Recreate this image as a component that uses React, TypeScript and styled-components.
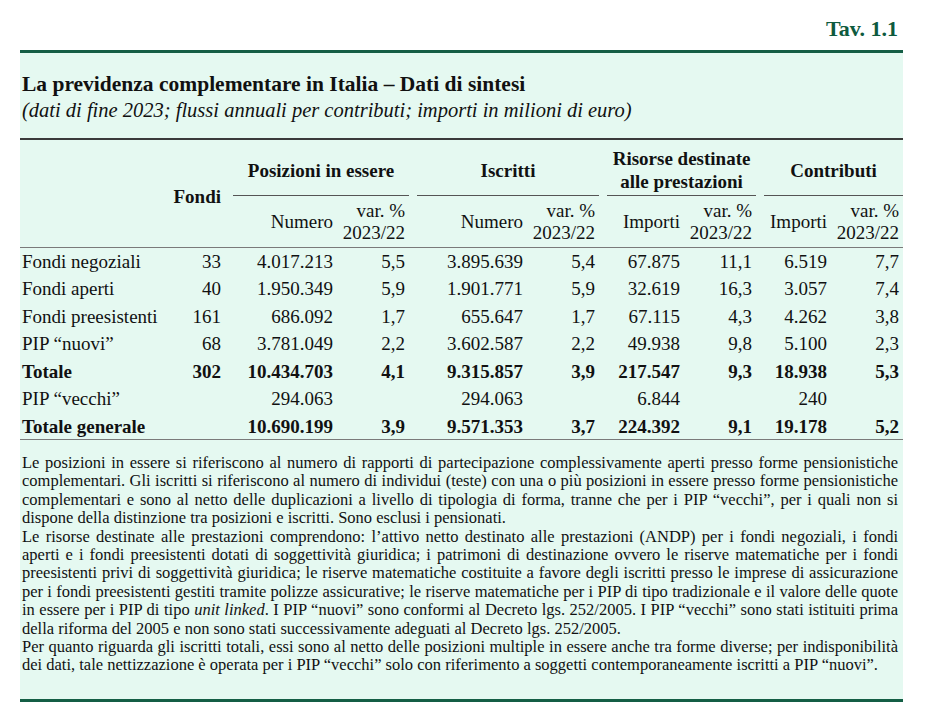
import React from "react";
import styled, { createGlobalStyle } from "styled-components";

const GlobalStyle = createGlobalStyle`
  html, body { margin: 0; padding: 0; background: #ffffff; }
  body { font-family: "Liberation Serif", "Times New Roman", serif; color: #111; }
`;

type Row = {
  label: string;
  fondi?: string;
  values: string[];
  bold?: boolean;
};

const rows: Row[] = [
  { label: "Fondi negoziali", fondi: "33", values: ["4.017.213", "5,5", "3.895.639", "5,4", "67.875", "11,1", "6.519", "7,7"] },
  { label: "Fondi aperti", fondi: "40", values: ["1.950.349", "5,9", "1.901.771", "5,9", "32.619", "16,3", "3.057", "7,4"] },
  { label: "Fondi preesistenti", fondi: "161", values: ["686.092", "1,7", "655.647", "1,7", "67.115", "4,3", "4.262", "3,8"] },
  { label: "PIP \u201cnuovi\u201d", fondi: "68", values: ["3.781.049", "2,2", "3.602.587", "2,2", "49.938", "9,8", "5.100", "2,3"] },
  { label: "Totale", fondi: "302", values: ["10.434.703", "4,1", "9.315.857", "3,9", "217.547", "9,3", "18.938", "5,3"], bold: true },
  { label: "PIP \u201cvecchi\u201d", values: ["294.063", "", "294.063", "", "6.844", "", "240", ""] },
  { label: "Totale generale", values: ["10.690.199", "3,9", "9.571.353", "3,7", "224.392", "9,1", "19.178", "5,2"], bold: true },
];

const groups = [
  { title: ["Posizioni in essere"], first: "Numero" },
  { title: ["Iscritti"], first: "Numero" },
  { title: ["Risorse destinate", "alle prestazioni"], first: "Importi" },
  { title: ["Contributi"], first: "Importi" },
];

const colWidths = [145, 60, 112, 72, 118, 72, 85, 72, 75, 72];

// note paragraphs, one entry per printed line
const notes: React.ReactNode[][] = [
  [
    "Le posizioni in essere si riferiscono al numero di rapporti di partecipazione complessivamente aperti presso forme pensionistiche",
    "complementari. Gli iscritti si riferiscono al numero di individui (teste) con una o più posizioni in essere presso forme pensionistiche",
    "complementari e sono al netto delle duplicazioni a livello di tipologia di forma, tranne che per i PIP “vecchi”, per i quali non si",
    "dispone della distinzione tra posizioni e iscritti. Sono esclusi i pensionati.",
  ],
  [
    "Le risorse destinate alle prestazioni comprendono: l’attivo netto destinato alle prestazioni (ANDP) per i fondi negoziali, i fondi",
    "aperti e i fondi preesistenti dotati di soggettività giuridica; i patrimoni di destinazione ovvero le riserve matematiche per i fondi",
    "preesistenti privi di soggettività giuridica; le riserve matematiche costituite a favore degli iscritti presso le imprese di assicurazione",
    "per i fondi preesistenti gestiti tramite polizze assicurative; le riserve matematiche per i PIP di tipo tradizionale e il valore delle quote",
    <>
      in essere per i PIP di tipo <i>unit linked</i>. I PIP “nuovi” sono conformi al Decreto lgs. 252/2005. I PIP “vecchi” sono stati istituiti prima
    </>,
    "della riforma del 2005 e non sono stati successivamente adeguati al Decreto lgs. 252/2005.",
  ],
  [
    "Per quanto riguarda gli iscritti totali, essi sono al netto delle posizioni multiple in essere anche tra forme diverse; per indisponibilità",
    "dei dati, tale nettizzazione è operata per i PIP “vecchi” solo con riferimento a soggetti contemporaneamente iscritti a PIP “nuovi”.",
  ],
];

const Page = styled.div`
  padding: 0 25px 0 20px;
`;

const TavBar = styled.div`
  height: 50px;
  display: flex;
  align-items: flex-end;
  justify-content: flex-end;
  padding-right: 5px;
  box-sizing: border-box;
`;

const Tav = styled.div`
  color: #0e5a3e;
  font-weight: bold;
  font-size: 22px;
  line-height: 22px;
  padding-bottom: 10px;
`;

const Panel = styled.div`
  background: #e5f9f1;
  border-top: 3px solid #145e45;
  border-bottom: 3px solid #145e45;
  padding-bottom: 24px;
`;

const TitleBlock = styled.div`
  padding: 19px 5px 15px 2px;
  border-bottom: 2px solid #3b3b3b;
`;

const Title = styled.div`
  font-weight: bold;
  font-size: 21.5px;
  line-height: 25px;
`;

const Subtitle = styled.div`
  font-style: italic;
  font-size: 20.5px;
  line-height: 26px;
`;

const Table = styled.table`
  width: 100%;
  table-layout: fixed;
  border-collapse: collapse;
  font-size: 19px;
  border-bottom: 1px solid #7a7a7a;
`;

const HeadCell = styled.th<{ $align?: string }>`
  font-weight: bold;
  text-align: ${(p) => p.$align || "right"};
  vertical-align: middle;
  padding: 6px 4px 0 0;
  line-height: 23px;
`;

const GroupRule = styled.div`
  margin-left: 8px;
  border-bottom: 1px solid #555;
  text-align: center;
  height: 56px;
  padding-top: 5px;
  display: flex;
  flex-direction: column;
  justify-content: center;
  font-weight: bold;
  line-height: 23px;
  box-sizing: border-box;
`;

const SubRow = styled.tr`
  height: 51px;
  border-bottom: 1px solid #7a7a7a;
`;

const SubCell = styled.th`
  font-weight: normal;
  text-align: right;
  vertical-align: middle;
  padding: 1px 4px 0 0;
  line-height: 22px;
  white-space: nowrap;
`;

const BodyRow = styled.tr<{ $bold?: boolean }>`
  height: 27.5px;
  font-weight: ${(p) => (p.$bold ? "bold" : "normal")};
`;

const LabelCell = styled.td`
  text-align: left;
  padding: 2px 0 0 2px;
  white-space: nowrap;
`;

const NumCell = styled.td`
  text-align: right;
  padding: 2px 4px 0 0;
  white-space: nowrap;
`;

const Notes = styled.div`
  padding: 14px 5px 0 2px;
  font-size: 16.5px;
  line-height: 18.4px;
`;

const NoteLine = styled.div<{ $last?: boolean }>`
  white-space: nowrap;
  text-align: ${(p) => (p.$last ? "left" : "justify")};
  text-align-last: ${(p) => (p.$last ? "left" : "justify")};
`;

export default function App() {
  return (
    <>
      <GlobalStyle />
      <Page>
        <TavBar>
          <Tav>Tav. 1.1</Tav>
        </TavBar>
        <Panel>
          <TitleBlock>
            <Title>La previdenza complementare in Italia – Dati di sintesi</Title>
            <Subtitle>(dati di fine 2023; flussi annuali per contributi; importi in milioni di euro)</Subtitle>
          </TitleBlock>
          <Table>
            <colgroup>
              {colWidths.map((w, i) => (
                <col key={i} style={{ width: w }} />
              ))}
            </colgroup>
            <thead>
              <tr>
                <HeadCell rowSpan={2} />
                <HeadCell rowSpan={2}>Fondi</HeadCell>
                {groups.map((g) => (
                  <th key={g.title[0]} colSpan={2} style={{ padding: 0 }}>
                    <GroupRule>
                      {g.title.map((t) => (
                        <div key={t}>{t}</div>
                      ))}
                    </GroupRule>
                  </th>
                ))}
              </tr>
              <SubRow>
                {groups.map((g) => (
                  <React.Fragment key={g.title[0]}>
                    <SubCell>{g.first}</SubCell>
                    <SubCell>
                      var. %
                      <br />
                      2023/22
                    </SubCell>
                  </React.Fragment>
                ))}
              </SubRow>
            </thead>
            <tbody>
              {rows.map((r) => (
                <BodyRow key={r.label} $bold={r.bold}>
                  <LabelCell>{r.label}</LabelCell>
                  <NumCell>{r.fondi || ""}</NumCell>
                  {r.values.map((v, i) => (
                    <NumCell key={i}>{v}</NumCell>
                  ))}
                </BodyRow>
              ))}
            </tbody>
          </Table>
          <Notes>
            {notes.map((para, pi) =>
              para.map((line, li) => (
                <NoteLine key={`${pi}-${li}`} $last={li === para.length - 1}>
                  {line}
                </NoteLine>
              ))
            )}
          </Notes>
        </Panel>
      </Page>
    </>
  );
}
